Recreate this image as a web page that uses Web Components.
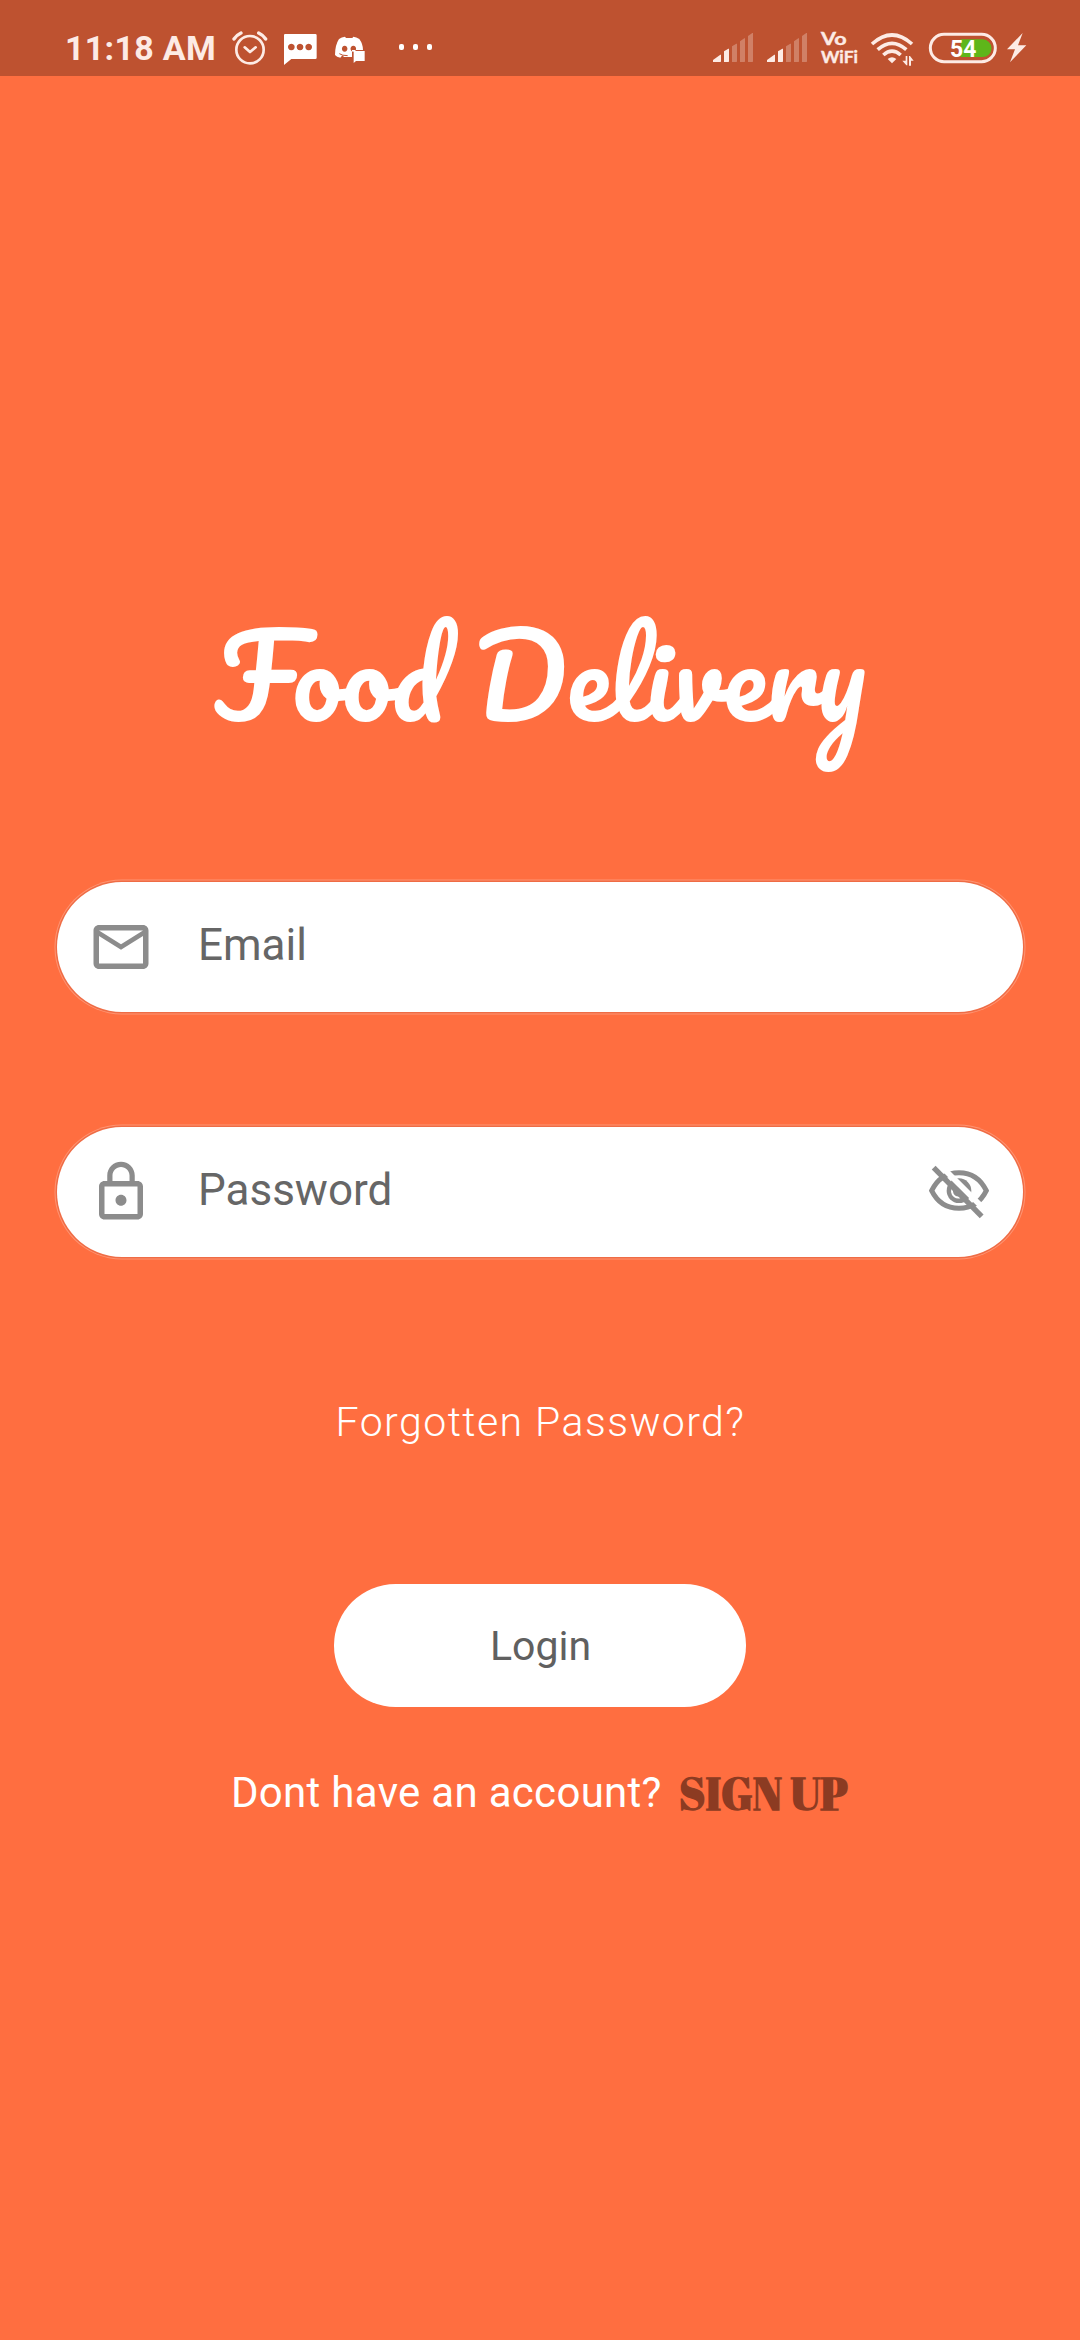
<!DOCTYPE html>
<html lang="en">
<head>
<meta charset="utf-8">
<title>Food Delivery</title>
<style>
html, body { margin: 0; height: 100%; background: #ff6e40; }
body { font-family: Roboto, "Liberation Sans", sans-serif; }
</style>
</head>
<body>
<login-screen></login-screen>
<script>
const define = (name, html) => {
  const t = document.createElement('template');
  t.innerHTML = html;
  customElements.define(name, class extends HTMLElement {
    constructor() {
      super();
      this.attachShadow({ mode: 'open' }).append(t.content.cloneNode(true));
    }
  });
};

/* Status icon art is drawn on a grid of three units per pixel. */
const ICONS = {
  alarm: ['570 135', `<g fill="none" stroke="#fdebe5" stroke-width="8" stroke-linecap="round" stroke-linejoin="round"><circle cx="630" cy="119" r="41"/><path d="M614 112l16 14 17-14"/><path d="M582 87q8-12 21-18M656 69q13 6 21 18" stroke-width="10"/></g>`],
  chat: ['705 150', `<path fill="#fff" fill-rule="evenodd" d="M735 72h91q4 0 4 4v67q0 4-4 4h-72l-22 18V76q0-4 3-4zM754 101a10 10 0 1 0 .1 0zM780 101a10 10 0 1 0 .1 0zM806 101a10 10 0 1 0 .1 0z"/>`],
  game: ['855 150', `<path fill="#fff" fill-rule="evenodd" d="M897 87q8-6 18-7l3 4h19l3-4q9 1 18 7 11 15 11 33h-33v21h-24l-5-5-6 7q-11-2-16-8 0-30 12-48zM914 107c-11 0-11 18 0 18s11-18 0-18zM940 107c-11 0-11 18 0 18s11-18 0-18z"/><path fill="none" stroke="#be5230" stroke-width="3" d="M898 131q8 6 25 6"/><path fill="#fff" d="M942 123h32v30h-26l-7 6v-33z"/>`],
  dots: ['1005 195', `<g fill="#fff"><rect x="1077" y="102" width="15" height="18" rx="6"/><rect x="1119" y="102" width="15" height="18" rx="6"/><rect x="1161" y="102" width="15" height="18" rx="6"/></g>`],
  signal: ['60 162', `<g fill="#fdebe5"><path d="M69 156v-6l22-16h2v20q0 2-2 2z"/><path d="M102 156v-32l13-8h2v38q0 2-2 2z"/><g opacity=".3"><path d="M126 156v-47l13-8h2v53q0 2-2 2zM150 156V94l13-9h2v69q0 2-2 2zM174 156V78l13-9h2v85q0 2-2 2z"/></g></g>`],
  vowifi: ['384 141', `<g fill="#fdebe5" stroke="#fdebe5" stroke-width="1.2" font-family="Lato" font-weight="700"><text x="393" y="106" font-size="50" textLength="77" lengthAdjust="spacingAndGlyphs">Vo</text><text x="393" y="158" font-size="52" textLength="111" lengthAdjust="spacingAndGlyphs">WiFi</text></g>`],
  wifi: ['525 180', `<g fill="none" stroke="#fdebe5" stroke-width="11"><path d="M546 102q60-54 120 0"/><path d="M563 119q43-38 86 0"/><path d="M580 135q26-23 52 0"/></g><path fill="#fdebe5" d="M593 147q13-11 26 0l-13 13z"/><path fill="#fdebe5" d="M647 138h5v28h-3l-12-14h10zM657 167v-29h3l11 14h-8v15z"/>`],
  battery: ['705 225', `<rect x="721" y="73" width="195" height="82" rx="41" fill="none" stroke="#fdebe5" stroke-width="9"/><path fill="#5eb61a" d="M812 88h66a26 26 0 0 1 0 53h-66z"/><text x="780" y="140" font-size="71" font-weight="700" fill="#fff" textLength="79" lengthAdjust="spacingAndGlyphs">54</text>`],
  bolt: ['930 240', `<path fill="#fdebe5" d="M998 69l-47 49h24l-15 39 49-51h-25z"/>`]
};
customElements.define('status-icon', class extends HTMLElement {
  constructor() { super(); this.attachShadow({ mode: 'open' }); }
  connectedCallback() {
    const [box, art] = ICONS[this.getAttribute('name')];
    const [x, w] = box.split(' ').map(Number);
    this.shadowRoot.innerHTML = `<style>:host{display:block;flex:none}svg{display:block}</style><svg width="${w / 3}" height="76" viewBox="${x} -30 ${w} 228">${art}</svg>`;
  }
});

define('status-bar', `<style>
:host { display: flex; height: 76px; background: #be5230; flex: none; }
.time { box-sizing: border-box; width: 230px; padding: 20px 0 0 65px; color: #fdebe5; font-weight: 700; font-size: 34px; line-height: 56px; white-space: nowrap; letter-spacing: .3px; }
.right { display: flex; margin-left: auto; }
</style>
<div class="time">11:18 AM</div>
<status-icon name="alarm"></status-icon><status-icon name="chat"></status-icon><status-icon name="game"></status-icon><status-icon name="dots"></status-icon>
<div class="right"><status-icon name="signal"></status-icon><status-icon name="signal"></status-icon><status-icon name="vowifi"></status-icon><status-icon name="wifi"></status-icon><status-icon name="battery"></status-icon><status-icon name="bolt"></status-icon></div>`);

define('brand-title', `<style>
:host { display: block; height: 200px; font: 400 110px/149px Pacifico, cursive; color: #fff; white-space: nowrap; }
</style><slot></slot>`);

define('pill-field', `<style>
:host { display: flex; box-sizing: border-box; width: 966px; height: 130px; align-items: center; padding: 0 31px; border-radius: 65px; background: #fff; box-shadow: 0 0 0 1.5px #ef6c45, 0 0 0 2.5px #ff9472; color: #666; font-size: 44px; line-height: 52px; }
.label { flex: 1; padding-left: 44px; margin-top: -4px; }
</style>
<slot name="lead"></slot><div class="label"><slot></slot></div><slot name="trail"></slot>`);

define('pill-button', `<style>
:host { display: flex; width: 412px; height: 123.5px; border-radius: 62px; background: #fff; color: #606060; font-size: 41px; align-items: center; justify-content: center; box-sizing: border-box; padding: 1px 0 0 1px; }
</style><slot></slot>`);

const FIELD_ICONS = {
  mail: 'M22 6c0-1.1-.9-2-2-2H4c-1.1 0-2 .9-2 2v12c0 1.1.9 2 2 2h16c1.1 0 2-.9 2-2V6zm-2 0l-8 4.99L4 6h16zm0 12H4V8l8 5 8-5v10z',
  lock: 'M12 17c1.1 0 2-.9 2-2s-.9-2-2-2-2 .9-2 2 .9 2 2 2zm6-9h-1V6c0-2.76-2.24-5-5-5S7 3.24 7 6v2H6c-1.1 0-2 .9-2 2v10c0 1.1.9 2 2 2h12c1.1 0 2-.9 2-2V10c0-1.1-.9-2-2-2zM8.9 6c0-1.71 1.39-3.1 3.1-3.1s3.1 1.39 3.1 3.1v2H8.9V6zM18 20H6V10h12v10z'
};
customElements.define('field-icon', class extends HTMLElement {
  constructor() { super(); this.attachShadow({ mode: 'open' }); }
  connectedCallback() {
    const n = this.getAttribute('name');
    /* The crossed-out eye uses the 3-unit grid, centred on the pupil. */
    const art = n === 'hidden'
      ? `<svg width="66" height="66" viewBox="198 147 198 198"><path d="M215 242Q241 188 297 188Q353 188 379 242Q353 295 297 295Q241 295 215 242Z" fill="none" stroke="#8c8c8c" stroke-width="15"/><circle cx="297" cy="242" r="37" fill="#8c8c8c"/><path d="M280 231a19 19 0 1 0 31 24" fill="none" stroke="#fff" stroke-width="6"/><path d="M234 159L376 301" stroke="#fff" stroke-width="17"/><path d="M221 173L365 319" stroke="#8c8c8c" stroke-width="16"/></svg>`
      : `<svg width="66" height="66" viewBox="0 0 24 24" fill="#8c8c8c"><path d="${FIELD_ICONS[n]}"/></svg>`;
    this.shadowRoot.innerHTML = `<style>:host{display:block;flex:none}svg{display:block}</style>${art}`;
  }
});

define('sign-up-row', `<style>
:host { display: flex; height: 60px; padding-left: 231px; align-items: flex-start; color: #fff; font-size: 42px; line-height: 62px; box-sizing: border-box; width: 1080px; }
span { width: 448px; white-space: nowrap; letter-spacing: .3px; }
b { font: 700 44px/63px "Abril Fatface", serif; color: #8c3b22; white-space: nowrap; }
</style>
<span><slot></slot></span><b><slot name="action"></slot></b>`);

define('login-screen', `<style>
:host { display: flex; flex-direction: column; width: 1080px; height: 2340px; background: #ff6e40; }
main { display: flex; flex-direction: column; align-items: center; padding-top: 524px; }
.email { margin-top: 82px; }
.password { margin-top: 115px; }
.forgot { margin-top: 134px; height: 60px; line-height: 62px; font-size: 41px; font-weight: 300; letter-spacing: 1.45px; color: #fff; white-space: nowrap; padding-left: 1px; }
pill-button { margin-top: 132.5px; }
sign-up-row { margin-top: 55px; }
</style>
<status-bar></status-bar>
<main>
<brand-title>Food Delivery</brand-title>
<pill-field class="email"><field-icon slot="lead" name="mail"></field-icon>Email</pill-field>
<pill-field class="password"><field-icon slot="lead" name="lock"></field-icon>Password<field-icon slot="trail" name="hidden"></field-icon></pill-field>
<div class="forgot">Forgotten Password?</div>
<pill-button>Login</pill-button>
<sign-up-row>Dont have an account?<span slot="action">SIGN UP</span></sign-up-row>
</main>`);
</script>
</body>
</html>
